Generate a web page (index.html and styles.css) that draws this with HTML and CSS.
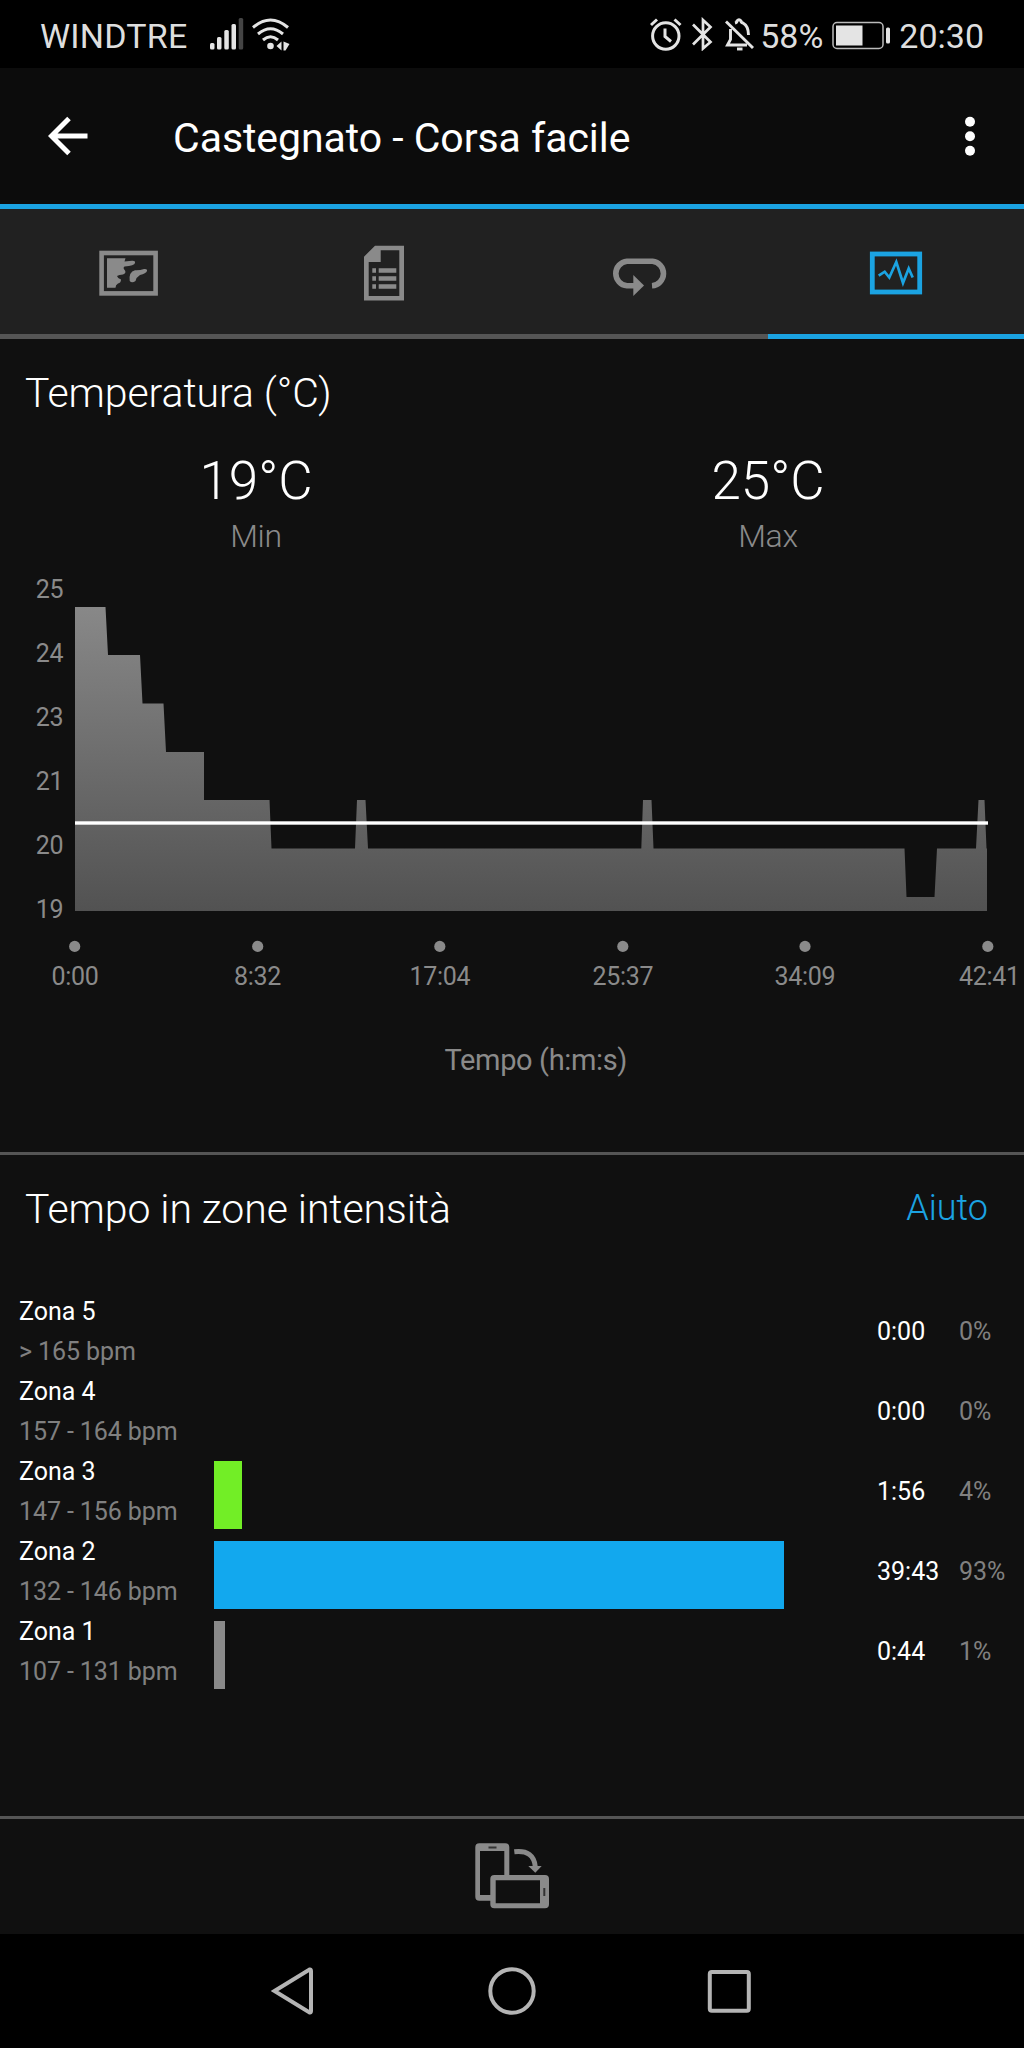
FILE: index.html
```html
<!DOCTYPE html>
<html lang="it">
<head>
    <meta charset="UTF-8">
    <meta name="viewport" content="width=device-width, initial-scale=1.0">
    <title>Castegnato - Corsa facile</title>
    <link rel="stylesheet" href="styles.css">
</head>
<body>
    <div id="app">
        <div class="status-bar">
            <span class="carrier">WINDTRE</span>
            <svg class="signal" width="34" height="34" viewBox="0 0 34 34" fill="#e4e4e4">
                <rect x="0" y="26" width="4.5" height="6.5" rx="1.5"/>
                <rect x="7" y="20" width="4.5" height="12.5" rx="1.5"/>
                <rect x="14.3" y="13" width="4.5" height="19.5" rx="1.5"/>
                <rect x="21.5" y="7" width="4.5" height="25.5" rx="1.5"/>
                <rect x="28.7" y="1" width="4.5" height="31.5" rx="1.5" fill="#444"/>
            </svg>
            <svg class="wifi" width="38" height="34" viewBox="0 0 38 34" fill="none" stroke="#e4e4e4" stroke-width="3">
                <path d="M1 10.5Q18.5 -4.5 36 10.5M6 17Q18.5 6.5 31 17M11 23Q18.5 16.5 26 23"/>
                <circle cx="18.5" cy="29" r="3.3" fill="#e4e4e4" stroke="none"/>
                <path d="M24.5 29L29.5 24.5V33.5ZM31.5 24.5L37.5 27 33.5 33.5H31.5Z" fill="#e4e4e4" stroke="none"/>
            </svg>
            <div class="status-right">
                <svg class="alarm" width="32" height="34" viewBox="0 0 32 34" fill="none" stroke="#e4e4e4" stroke-width="3">
                    <circle cx="15.8" cy="19" r="13.2"/>
                    <path d="M15 11.5V19.5L21 24.5M1 8L7 2.5M24.5 2.5L30.5 8"/>
                </svg>
                <svg class="bluetooth" width="21" height="34" viewBox="0 0 21 34" fill="none" stroke="#e4e4e4" stroke-width="2.7">
                    <path d="M1 7.5L18.5 25 11 31.5V3L18.5 10 1 27.5"/>
                </svg>
                <svg class="bell" width="30" height="34" viewBox="0 0 30 34" fill="none" stroke="#e4e4e4" stroke-width="2.9">
                    <path d="M1 4.5L28 31"/>
                    <path d="M5.5 12V22.5L2.5 28H22M10 6Q12 5.5 12 4Q14 1.5 16 4Q16 5.5 18 6Q23.5 9 23.5 18"/>
                    <path d="M12 32H17.5"/>
                </svg>
                <span class="percent">58%</span>
                <svg class="battery" width="59" height="30" viewBox="0 0 59 30">
                    <rect x="1" y="1.5" width="50" height="26" rx="4" fill="none" stroke="#bbb" stroke-width="1.5"/>
                    <rect x="4" y="4.5" width="26.5" height="20" fill="#e4e4e4"/>
                    <rect x="54" y="6.5" width="4" height="16" rx="1.5" fill="#e4e4e4"/>
                </svg>
                <span class="clock">20:30</span>
            </div>
        </div>

        <div class="app-bar">
            <svg class="back" width="40" height="40" viewBox="0 0 40 40" fill="none" stroke="#fff" stroke-width="5">
                <path d="M3.5 20H39.5M21 2.5L3.5 20 21 37.5"/>
            </svg>
            <h1 class="app-title">Castegnato - Corsa facile</h1>
            <svg class="more" width="12" height="40" viewBox="0 0 12 40" fill="#fff">
                <circle cx="6" cy="5.7" r="5"/>
                <circle cx="6" cy="20.2" r="5"/>
                <circle cx="6" cy="34.7" r="5"/>
            </svg>
        </div>

        <div class="tabs">
            <div class="tab">
                <svg width="64" height="65" viewBox="0 0 64 65" fill="#8a8a8a">
                    <rect x="5.6" y="14" width="54" height="40.4" fill="none" stroke="#8a8a8a" stroke-width="4.6"/>
                    <path d="M11 19.3H29.5L28.5 22.5L36 21.8Q39.5 21.5 39 24Q38.5 26.5 28.5 27.5Q26.5 29 29 31.5Q30.5 34 27 35.5Q23 35.5 21 37Q21.5 39 25 40.5Q25 44 22 44.5Q19.5 46 19.5 48.7H11Z"/>
                    <path d="M48 30Q51.5 29.5 51 32Q50 34.5 44 36Q40.5 38 39.5 42Q36 44.5 33.7 42Q32.5 33 39 31.3Q44 31.5 48 30Z"/>
                </svg>
            </div>
            <div class="tab">
                <svg width="64" height="65" viewBox="0 0 64 65" fill="#8a8a8a">
                    <path fill-rule="evenodd" d="M23 6.7H52V61.5H12V17.7ZM28.7 11.3V23H16.7V57H47.3V11.3Z"/>
                    <path d="M20.3 29.3H24V33.7H20.3ZM26.7 29.3H44.3V33.7H26.7ZM20.3 37.3H24V41.7H20.3ZM26.7 37.3H44.3V41.7H26.7ZM20.3 45.3H24V49.7H20.3ZM26.7 45.3H44.3V49.7H26.7Z"/>
                </svg>
            </div>
            <div class="tab">
                <svg width="64" height="65" viewBox="0 0 64 65">
                    <path d="M44 46.8A12.3 12.3 0 0 0 44.5 22.3H19A12.3 12.3 0 0 0 19 46.8H27" fill="none" stroke="#8a8a8a" stroke-width="5.6"/>
                    <path d="M25.3 36L36 46.5 25.3 57Z" fill="#8a8a8a"/>
                </svg>
            </div>
            <div class="tab active">
                <svg width="64" height="65" viewBox="0 0 64 65" fill="none" stroke="#1ba3e2">
                    <rect x="8.3" y="15" width="47.4" height="38" stroke-width="4.8"/>
                    <path d="M14.7 36.7L20.7 32.7 25.3 38.5 32.3 23 39 44 44.7 29.5 48.7 38.5" stroke-width="2.7"/>
                </svg>
            </div>
        </div>

        <div class="temperature">
            <h2 class="section-title">Temperatura (°C)</h2>
            <div class="stats">
                <div class="stat">
                    <div class="stat-value">19°C</div>
                    <div class="stat-label">Min</div>
                </div>
                <div class="stat">
                    <div class="stat-value">25°C</div>
                    <div class="stat-label">Max</div>
                </div>
            </div>
            <svg class="chart" width="1024" height="540" viewBox="0 560 1024 540">
                <defs>
                    <linearGradient id="area" x1="0" y1="0" x2="0" y2="1">
                        <stop offset="0" stop-color="#888"/>
                        <stop offset="1" stop-color="#525252"/>
                    </linearGradient>
                </defs>
                <path fill="url(#area)" d="M75 911V607H105.5L108 655H140L142.5 703.5H163.5L166 752H204V800H269.5L271.5 848.5H355L357 800H365.5L368 848.5H641.3L643 800H651.5L653.5 848.5H904.5L906.5 897H934.5L937 848.5H976L978.5 800H984.5L986.5 848.5H987V911Z"/>
                <!-- average -->
                <rect x="75" y="821.3" width="913" height="3.4" fill="#fff"/>
                <g class="y-axis">
                    <text x="63.2" y="598">25</text>
                    <text x="63.2" y="662">24</text>
                    <text x="63.2" y="726">23</text>
                    <text x="63.2" y="790">21</text>
                    <text x="63.2" y="854">20</text>
                    <text x="63.2" y="918">19</text>
                </g>
                <g fill="#8a8a8a">
                    <circle cx="74.7" cy="946.4" r="5.6"/>
                    <circle cx="257.7" cy="946.4" r="5.6"/>
                    <circle cx="439.8" cy="946.4" r="5.6"/>
                    <circle cx="622.8" cy="946.4" r="5.6"/>
                    <circle cx="805" cy="946.4" r="5.6"/>
                    <circle cx="987.8" cy="946.4" r="5.6"/>
                </g>
                <g class="x-axis">
                    <text x="75" y="985">0:00</text>
                    <text x="257.5" y="985">8:32</text>
                    <text x="439.8" y="985">17:04</text>
                    <text x="623" y="985">25:37</text>
                    <text x="805" y="985">34:09</text>
                    <text x="989.5" y="985">42:41</text>
                </g>
                <text class="axis-title" x="535.8" y="1070">Tempo (h:m:s)</text>
            </svg>
        </div>

        <div class="zones">
            <div class="zones-header">
                <h2 class="section-title">Tempo in zone intensità</h2>
                <span class="help">Aiuto</span>
            </div>
            <div class="zone-list">
                <div class="zone">
                    <div class="zone-info">
                        <div class="zone-name">Zona 5</div>
                        <div class="zone-range">&gt; 165 bpm</div>
                    </div>
                    <div class="track"></div>
                    <span class="time">0:00</span>
                    <span class="share">0%</span>
                </div>
                <div class="zone">
                    <div class="zone-info">
                        <div class="zone-name">Zona 4</div>
                        <div class="zone-range">157 - 164 bpm</div>
                    </div>
                    <div class="track"></div>
                    <span class="time">0:00</span>
                    <span class="share">0%</span>
                </div>
                <div class="zone">
                    <div class="zone-info">
                        <div class="zone-name">Zona 3</div>
                        <div class="zone-range">147 - 156 bpm</div>
                    </div>
                    <div class="track"><div class="bar green" style="width: 28px"></div></div>
                    <span class="time">1:56</span>
                    <span class="share">4%</span>
                </div>
                <div class="zone">
                    <div class="zone-info">
                        <div class="zone-name">Zona 2</div>
                        <div class="zone-range">132 - 146 bpm</div>
                    </div>
                    <div class="track"><div class="bar blue" style="width: 570px"></div></div>
                    <span class="time">39:43</span>
                    <span class="share">93%</span>
                </div>
                <div class="zone">
                    <div class="zone-info">
                        <div class="zone-name">Zona 1</div>
                        <div class="zone-range">107 - 131 bpm</div>
                    </div>
                    <div class="track"><div class="bar gray" style="width: 11px"></div></div>
                    <span class="time">0:44</span>
                    <span class="share">1%</span>
                </div>
            </div>
        </div>

        <div class="rotate-bar">
            <svg width="80" height="81" viewBox="0 0 80 81" fill="none" stroke="#8a8a8a">
                <path fill="#8a8a8a" stroke="none" d="M7.3 7.3H33.3Q37.3 7.3 37.3 11.3V40H32.3V15H8V59H19V64.7H7.3Q3.3 64.7 3.3 60.7V11.3Q3.3 7.3 7.3 7.3Z"/>
                <path fill="#8a8a8a" stroke="none" fill-rule="evenodd" d="M22.3 39H73Q77 39 77 43V68.3Q77 72.3 73 72.3H22.3Q18.3 72.3 18.3 68.3V43Q18.3 39 22.3 39ZM23.7 44.3V67.3H68V44.3Z"/>
                <path d="M16.5 11.6H24.5M72.3 52V60" stroke="#333" stroke-width="2"/>
                <path d="M42.3 15.8Q62 13.5 63.3 31" stroke-width="5"/>
                <path d="M56.3 30H69.7L63.3 36.8Z" fill="#8a8a8a" stroke="none"/>
            </svg>
        </div>

        <div class="nav-bar">
            <svg width="48" height="48" viewBox="0 0 48 48"><path d="M4.5 24L39.5 2.5Q41 2 41 4V44Q41 46 39.5 45.5Z"/></svg>
            <svg width="48" height="48" viewBox="0 0 48 48"><circle cx="24" cy="24" r="21.7"/></svg>
            <svg width="48" height="48" viewBox="0 0 48 48"><rect x="3.8" y="5" width="39" height="38.7" rx="2"/></svg>
        </div>
    </div>
</body>
</html>
```
FILE: styles.css
```css
body {
    margin: 0;
    background-color: #000;
    color: white;
    font-family: Roboto, sans-serif;
}

h1, h2 {
    margin: 0;
}

svg {
    display: block;
    flex-shrink: 0;
}

#app {
    display: flex;
    flex-direction: column;
    width: 1024px;
    height: 2048px;
    overflow: hidden;
}

/* system status bar */
.status-bar {
    display: flex;
    align-items: center;
    height: 68px;
    padding: 0 40px;
    box-sizing: border-box;
    font-size: 34px;
    color: #dedede;
}

.carrier, .percent, .clock {
    padding-top: 3px;
}

.carrier {
    letter-spacing: 0.2px;
}

.signal {
    margin-left: 22px;
}

.wifi {
    margin-left: 8px;
}

.status-right {
    display: flex;
    align-items: center;
    margin-left: auto;
}

.bluetooth {
    margin-left: 10px;
}

.bell {
    margin-left: 12px;
}

.percent {
    margin-left: 5px;
}

.battery {
    margin-left: 9px;
    margin-top: 3px;
}

.clock {
    margin-left: 8px;
}

/* title bar */
.app-bar {
    display: flex;
    align-items: center;
    height: 136px;
    padding: 0 48px;
    background-color: #0c0c0c;
}

.app-title {
    flex: 1;
    margin-left: 85px;
    padding-top: 3px;
    font-size: 41px;
    font-weight: 400;
    letter-spacing: -0.05px;
}

/* tabs */
.tabs {
    display: flex;
    height: 135px;
    box-sizing: border-box;
    border-top: 5px solid #1ba3e2;
    background-color: #212121;
}

.tab {
    display: flex;
    flex: 1;
    align-items: center;
    justify-content: center;
    border-bottom: 5px solid #555;
}

.tab.active {
    border-bottom-color: #1ba3e2;
}

/* temperature chart */
.temperature {
    height: 813px;
    box-sizing: border-box;
    padding-top: 24px;
    background-color: #101010;
}

.section-title {
    padding-left: 25px;
    font-size: 41px;
    line-height: 60px;
    font-weight: 300;
    letter-spacing: -0.08px;
}

.stats {
    display: flex;
    height: 137px;
    padding-top: 28px;
    box-sizing: border-box;
    text-align: center;
}

.stat {
    flex: 1;
}

.stat-value {
    font-size: 53px;
    line-height: 60px;
    font-weight: 300;
}

.stat-label {
    margin-top: 5px;
    font-size: 32px;
    line-height: 40px;
    font-weight: 300;
    letter-spacing: -0.3px;
    color: #8a8a8a;
}

.y-axis, .x-axis {
    font-size: 25px;
    letter-spacing: -0.3px;
    fill: #8a8a8a;
    text-anchor: end;
}

.x-axis {
    text-anchor: middle;
}

.axis-title {
    font-size: 29px;
    letter-spacing: -0.35px;
    fill: #8a8a8a;
    text-anchor: middle;
}

/* heart rate zones */
.zones {
    flex: 1;
    padding-top: 24px;
    border-top: 3px solid #555;
    background-color: #101010;
}

.zones-header {
    display: flex;
    justify-content: space-between;
    padding-right: 36px;
}

.help {
    font-size: 36px;
    line-height: 59px;
    font-weight: 300;
    color: #1ba3e2;
}

.zone-list {
    margin-top: 53px;
    padding-left: 19px;
}

.zone {
    display: flex;
    align-items: center;
    height: 80px;
    font-size: 25px;
    line-height: 40px;
}

.zone-info {
    width: 195px;
}

.zone-range, .share {
    color: #808080;
}

.zone-range {
    letter-spacing: -0.1px;
}

.track {
    width: 662px;
    height: 68px;
    margin-top: 5px;
}

.bar {
    height: 68px;
}

.bar.green {
    background-color: #72ee26;
}

.bar.blue {
    background-color: #12a8ee;
}

.bar.gray {
    background-color: #8a8a8a;
}

.time {
    width: 82px;
    padding-left: 1px;
}

/* bottom bars */
.rotate-bar {
    display: flex;
    align-items: center;
    justify-content: center;
    height: 115px;
    border-top: 3px solid #555;
    background-color: #101010;
}

.nav-bar {
    display: flex;
    align-items: center;
    justify-content: center;
    gap: 170px;
    height: 114px;
}

.nav-bar svg {
    fill: none;
    stroke: #b4b4b4;
    stroke-width: 4;
}
```
